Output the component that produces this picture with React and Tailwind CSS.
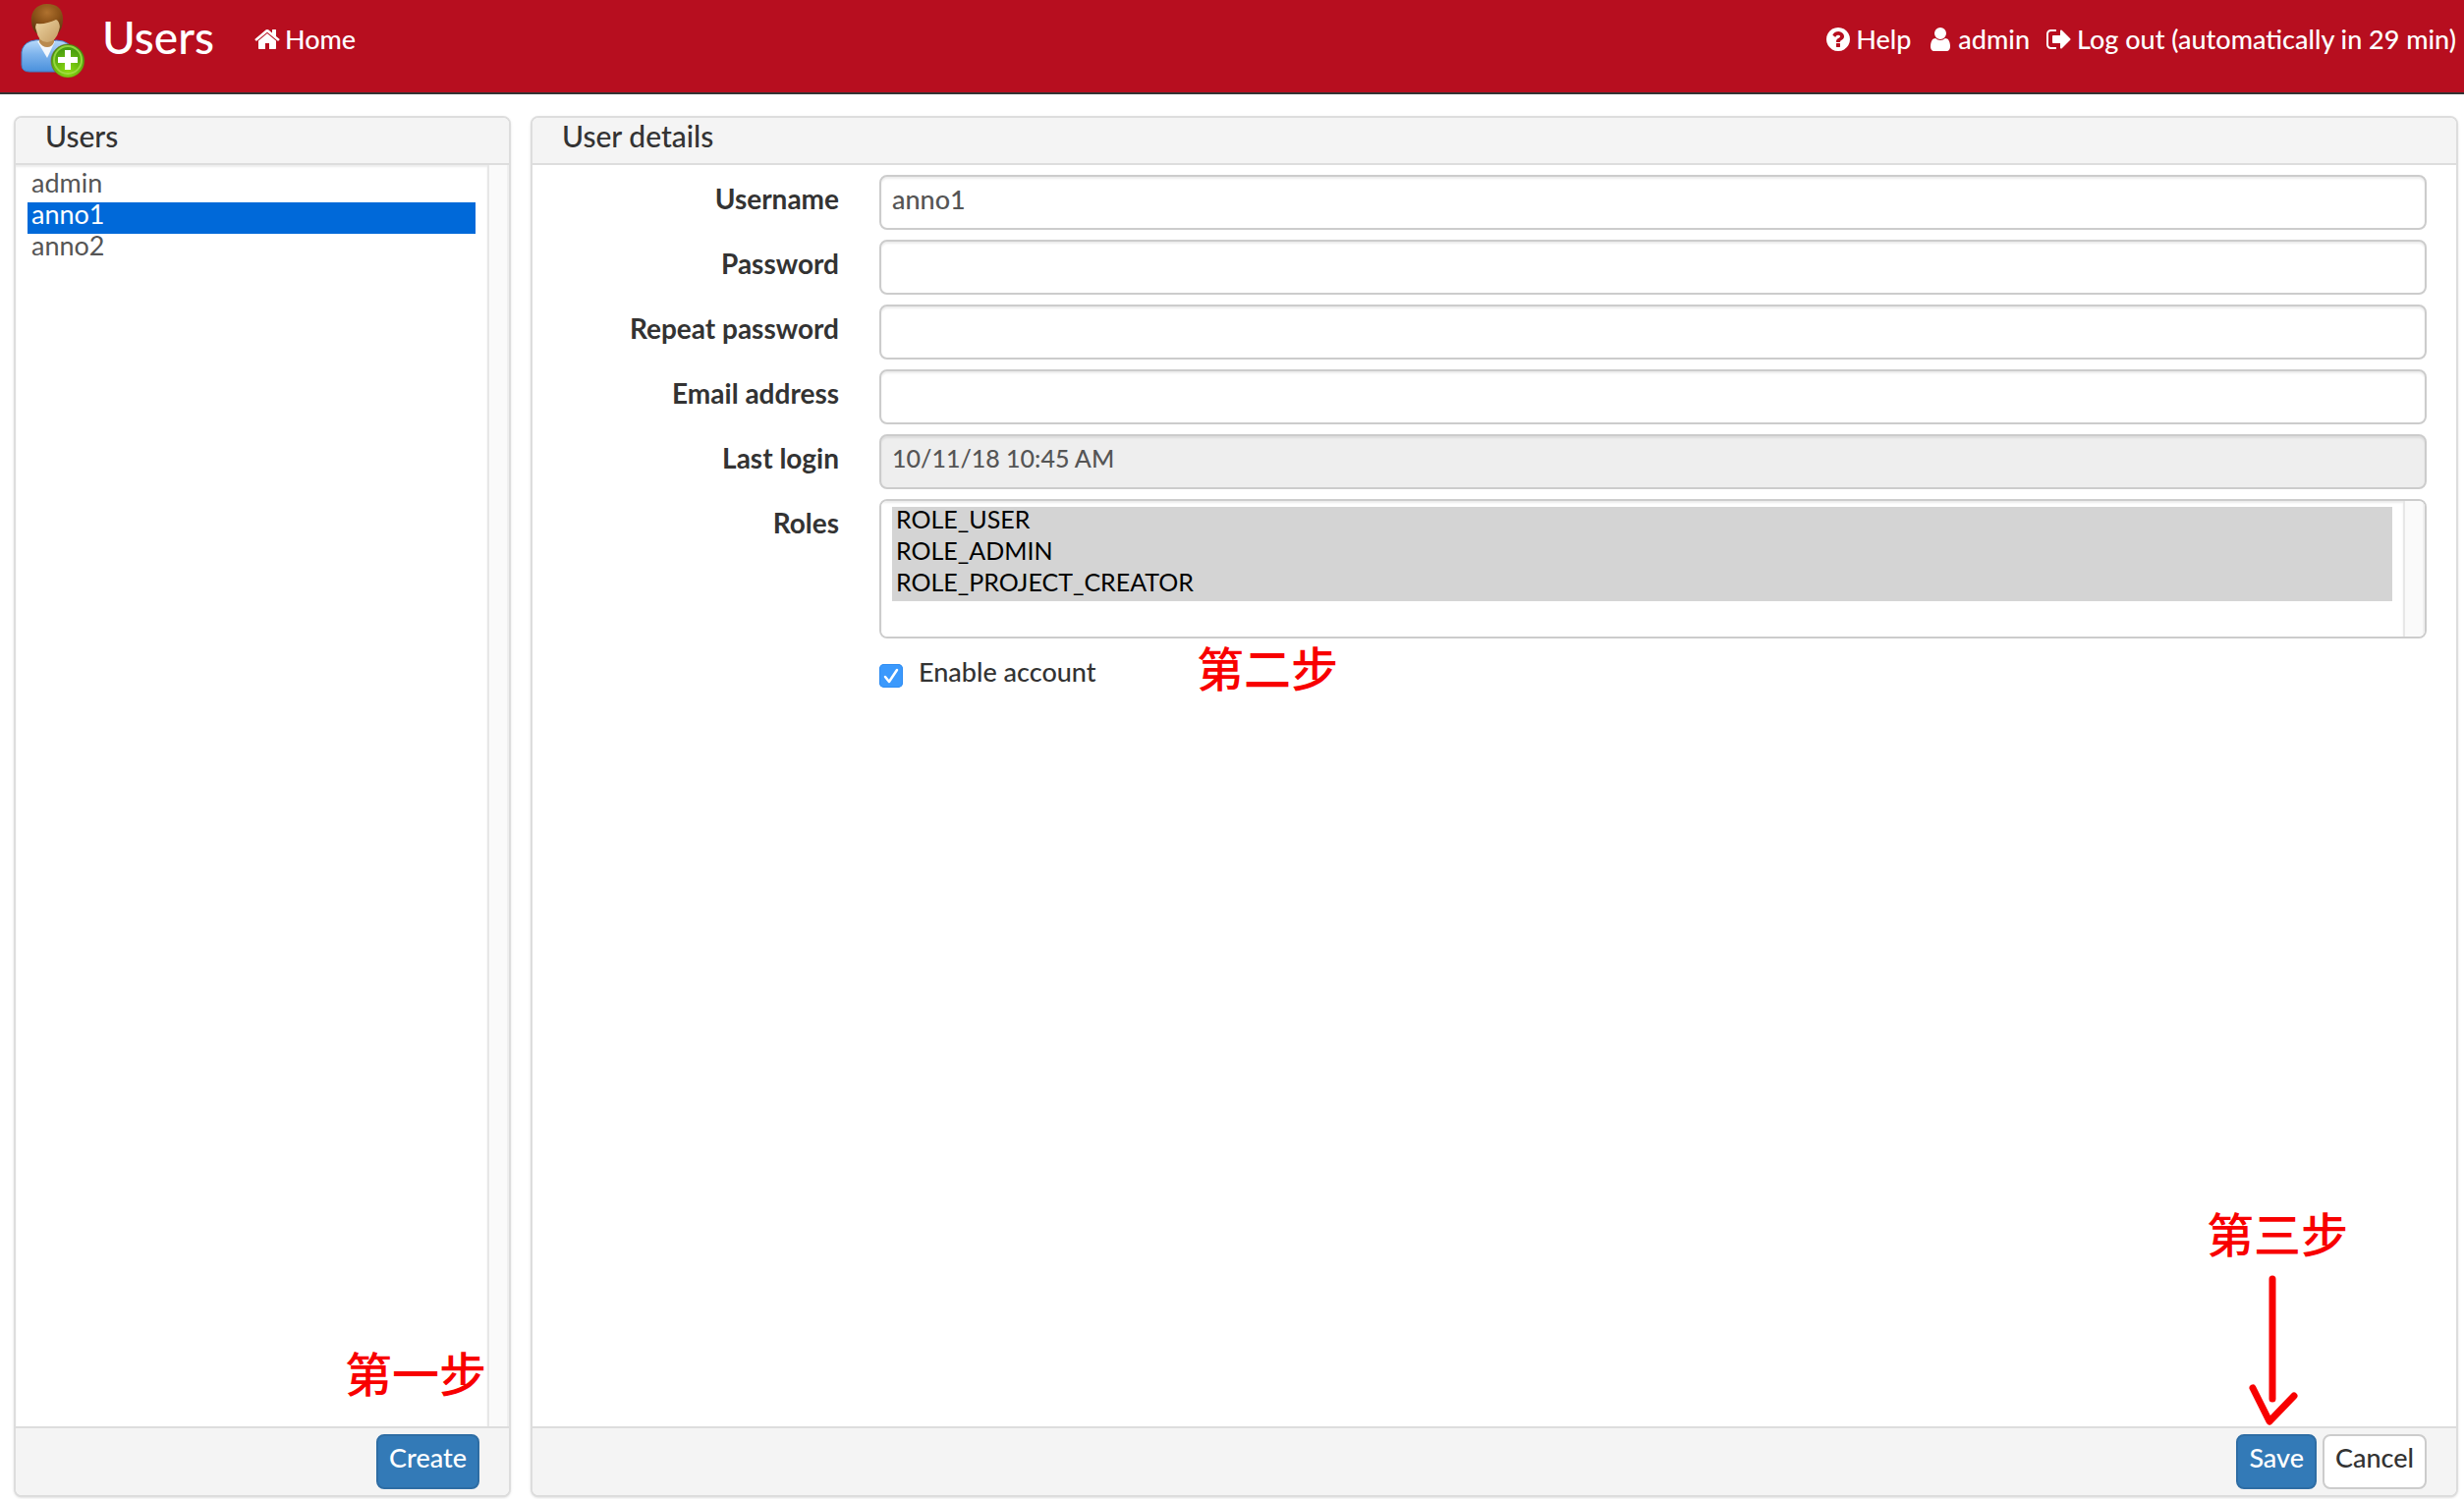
import React from "react";

const HOME =
  "M1472 992v480q0 26-19 45t-45 19h-384v-384h-256v384h-384q-26 0-45-19t-19-45v-480q0-1 .5-3t.5-3l575-474 575 474q1 2 1 6zm223-69l-62 74q-8 9-21 11h-3q-13 0-21-7l-692-577-692 577q-12 8-24 7-13-2-21-11l-62-74q-8-10-7-23.500t11-21.500l719-599q32-26 76-26t76 26l244 204v-195q0-14 9-23t23-9h192q14 0 23 9t9 23v408l219 182q10 8 11 21.500t-7 23.500z";
const HELP =
  "M1024 1376v-192q0-14-9-23t-23-9h-192q-14 0-23 9t-9 23v192q0 14 9 23t23 9h192q14 0 23-9t9-23zm256-672q0-88-55.500-163t-138.500-116-170-41q-243 0-371 213-15 24 8 42l132 100q7 6 19 6 16 0 25-12 53-68 86-92 34-24 86-24 48 0 85.500 26t37.500 59q0 38-20 61t-68 45q-63 28-115.500 86.500t-52.500 125.500v36q0 14 9 23t23 9h192q14 0 23-9t9-23q0-19 21.500-49.500t54.500-49.500q32-18 49-28.500t46-35 44.500-48 28-60.500 12.500-81zm384 192q0 209-103 385.500t-279.500 279.500-385.500 103-385.500-103-279.500-279.500-103-385.500 103-385.500 279.500-279.500 385.500-103 385.500 103 279.500 279.500 103 385.500z";
const USER =
  "M1536 1399q0 109-62.500 187t-150.500 78h-854q-88 0-150.500-78t-62.500-187q0-85 8.500-160.500t31.500-152 58.500-131 94-89 134.500-34.500q131 128 313 128t313-128q76 0 134.500 34.500t94 89 58.500 131 31.500 152 8.500 160.500zm-256-887q0 159-112.500 271.500t-271.500 112.500-271.500-112.500-112.500-271.500 112.500-271.500 271.500-112.500 271.500 112.500 112.500 271.500z";
const SIGN_OUT =
  "M704 1440q0 4 1 20t.5 26.500-3 23.500-10 19.500-20.500 6.500h-320q-119 0-203.500-84.500t-84.500-203.500v-704q0-119 84.500-203.500t203.500-84.500h320q13 0 22.500 9.500t9.500 22.500q0 4 1 20t.5 26.500-3 23.500-10 19.500-20.500 6.500h-320q-66 0-113 47t-47 113v704q0 66 47 113t113 47h312l11.500 1 11.500 3 8 5.500 7 9 2 13.500zm928-544q0 26-19 45l-544 544q-19 19-45 19t-45-19-19-45v-288h-448q-26 0-45-19t-19-45v-384q0-26 19-45t45-19h448v-288q0-26 19-45t45-19 45 19l544 544q19 19 19 45z";

function NavLink({ path, children }) {
  return (
    <a href="#" className="flex items-center gap-1 leading-[80px] text-white">
      <svg viewBox="0 0 1792 1792" className="size-7 fill-current" aria-hidden="true">
        <path d={path} />
      </svg>
      {children}
    </a>
  );
}

function UserAddIcon() {
  return (
    <svg viewBox="0 0 70 80" className="h-20 w-[70px]" aria-hidden="true">
      <defs>
        <linearGradient id="shirt" x1="0" y1="0" x2="0" y2="1">
          <stop offset="0" stopColor="#b9dafb" />
          <stop offset=".45" stopColor="#7db3ec" />
          <stop offset="1" stopColor="#4a90dc" />
        </linearGradient>
        <linearGradient id="face" x1="0" y1="0" x2="1" y2="1">
          <stop offset="0" stopColor="#f0d8a6" />
          <stop offset="1" stopColor="#c39a60" />
        </linearGradient>
        <radialGradient id="hair" cx=".5" cy=".3" r=".7">
          <stop offset="0" stopColor="#b0722f" />
          <stop offset=".6" stopColor="#8a5218" />
          <stop offset="1" stopColor="#683a12" />
        </radialGradient>
        <radialGradient id="badge" cx=".5" cy=".8" r=".75">
          <stop offset="0" stopColor="#8fdc10" />
          <stop offset="1" stopColor="#3f9410" />
        </radialGradient>
      </defs>
      <path d="M28 4C17 4 11 12 12 22c0 5 2 9 5 12h22c4-4 5-9 5-15C44 9 38 4 28 4z" fill="url(#hair)" />
      <path d="M11 42q7-2 10-1l6 3 10-3q8 0 13 4 5 5 5 14v8q-1 6-7 6H10q-8 0-8-7V53q1-8 9-11z" fill="url(#shirt)" stroke="#3f7fc8" />
      <path d="M18 42l10 17 8-17-4-1H22z" fill="#f3f7fc" />
      <path d="M20 36h15v7q-2 5-7 5t-8-5z" fill="#b98a4e" />
      <path d="M17 21q12 3 23-3 2 7 0 13-3 12-12 12T17 31q-2-5 0-10z" fill="url(#face)" />
      <path d="M13 20q0-13 13-15 14 0 17 12l-2 10q-1-6-4-7-10 5-20 4l-2 7q-2-5-2-11z" fill="url(#hair)" />
      <circle cx="49" cy="62" r="17" fill="url(#badge)" stroke="#8a4a12" strokeOpacity=".5" />
      <circle cx="49" cy="61" r="14" fill="none" stroke="#a5e04a" strokeOpacity=".8" strokeWidth="2" />
      <path d="M46 51h6v7h7v6h-7v7h-6v-7h-7v-6h7z" fill="#fff" />
    </svg>
  );
}

function Panel({ title, footer, children }) {
  return (
    <section className="flex flex-col overflow-hidden rounded-lg border-2 border-[#ddd] bg-white shadow-sm">
      <h2 className="border-b-2 border-[#ddd] bg-[#f4f4f4] px-[30px] pb-[10px] text-[30px] leading-[36px]">
        {title}
      </h2>
      <div className="relative flex flex-1 flex-col">{children}</div>
      <footer className="flex justify-end gap-[6px] border-t-2 border-[#ddd] bg-[#f4f4f4] px-[30px] py-[6px]">
        {footer}
      </footer>
    </section>
  );
}

function Button({ primary, children }) {
  return (
    <button
      type="button"
      className={
        primary
          ? "h-14 rounded-lg border-2 border-[#2e6da4] bg-[#337ab7] px-[11px] pb-2 text-white"
          : "h-14 rounded-lg border-2 border-[#ccc] bg-white px-[11px] pb-2 text-[#333]"
      }
    >
      {children}
    </button>
  );
}

function Track() {
  return (
    <div className="w-[22px] shrink-0 border-x-2 border-l-[#e7e7e7] border-r-[#f0f0f0] bg-[#fafafa]" />
  );
}

const fieldBox =
  "h-14 w-full rounded-lg border-2 border-[#ccc] px-[11px] pb-2 text-[#555] shadow-[inset_0_2px_2px_rgba(0,0,0,0.075)] outline-none";

function Field({ id, label, type = "text", value = "", disabled = false }) {
  return (
    <>
      <label htmlFor={id} className="text-right text-[28px] font-bold leading-[48px]">
        {label}
      </label>
      <input
        id={id}
        type={type}
        defaultValue={value}
        disabled={disabled}
        autoComplete="off"
        className={disabled ? `${fieldBox} bg-[#eee] text-[25px]` : `${fieldBox} bg-white`}
      />
    </>
  );
}

function Step({ className, children }) {
  return (
    <span
      className={`absolute whitespace-nowrap font-['Noto_Sans_CJK_SC',sans-serif] text-[48px] font-medium leading-[48px] text-[#f80000] ${className}`}
    >
      {children}
    </span>
  );
}

export default function App() {
  return (
    <div className="flex min-h-screen flex-col bg-white font-['Lato','Noto_Sans_CJK_SC',sans-serif] text-[27px] font-medium text-[#333]">
      <header className="flex h-24 items-start border-b-2 border-[#333] bg-[#b70e1f] pl-5 pr-2 text-white">
        <UserAddIcon />
        <h1 className="ml-[14px] mr-10 text-[46px] leading-[76px]">Users</h1>
        <NavLink path={HOME}>Home</NavLink>
        <nav className="ml-auto flex gap-4">
          <NavLink path={HELP}>Help</NavLink>
          <NavLink path={USER}>admin</NavLink>
          <NavLink path={SIGN_OUT}>Log out (automatically in 29 min)</NavLink>
        </nav>
      </header>

      <main className="grid flex-1 grid-cols-[506fr_1962fr] gap-5 pb-0.5 pl-[14px] pr-[6px] pt-[22px]">
        <Panel title="Users" footer={<Button primary>Create</Button>}>
          <div className="flex flex-1">
            <select
              size={3}
              aria-label="Users"
              defaultValue="anno1"
              className="flex-1 appearance-none overflow-hidden bg-white px-3 py-[6px] text-[#555] shadow-[inset_0_2px_2px_rgba(0,0,0,0.075)] outline-none"
            >
              {["admin", "anno1", "anno2"].map((name) => (
                <option
                  key={name}
                  className="-mt-[5px] h-[37px] px-1 py-0 checked:bg-transparent checked:bg-[linear-gradient(transparent_5px,#0069d9_5px)] checked:[-webkit-text-fill-color:#fff]"
                >
                  {name}
                </option>
              ))}
            </select>
            <Track />
          </div>
          <Step className="bottom-8 right-[23px]">第一步</Step>
        </Panel>

        <Panel
          title="User details"
          footer={
            <>
              <Button primary>Save</Button>
              <Button>Cancel</Button>
            </>
          }
        >
          <form className="grid grid-cols-[312px_1fr] gap-x-[41px] gap-y-[10px] pr-[30px] pt-[10px]">
            <Field id="username" label="Username" value="anno1" />
            <Field id="password" label="Password" type="password" />
            <Field id="repeat" label="Repeat password" type="password" />
            <Field id="email" label="Email address" />
            <Field id="login" label="Last login" value="10/11/18 10:45 AM" disabled />

            <label htmlFor="roles" className="text-right text-[28px] font-bold leading-[48px]">
              Roles
            </label>
            <div className="flex h-[142px] overflow-hidden rounded-lg border-2 border-[#ccc]">
              <select
                id="roles"
                multiple
                size={4}
                defaultValue={["ROLE_USER", "ROLE_ADMIN", "ROLE_PROJECT_CREATOR"]}
                className="h-full flex-1 appearance-none overflow-hidden bg-white px-[11px] py-[6px] text-[25px] text-black shadow-[inset_0_2px_2px_rgba(0,0,0,0.075)] outline-none"
              >
                {["ROLE_USER", "ROLE_ADMIN", "ROLE_PROJECT_CREATOR"].map((role) => (
                  <option
                    key={role}
                    className="-mt-[3px] h-[35px] px-1 py-0 checked:bg-transparent checked:bg-[linear-gradient(transparent_3px,#d4d4d4_3px)] checked:[-webkit-text-fill-color:#000]"
                  >
                    {role}
                  </option>
                ))}
              </select>
              <Track />
            </div>

            <div className="relative col-start-2 flex">
              <label className="flex items-start gap-4 leading-[48px]">
                <span className="relative mt-4 flex size-6">
                  <input
                    type="checkbox"
                    defaultChecked
                    className="peer size-6 appearance-none rounded-[5px] bg-white ring-1 ring-inset ring-[#aaa] checked:bg-[#3b99fc] checked:ring-[#2f8df3]"
                  />
                  <svg
                    viewBox="0 0 24 24"
                    className="pointer-events-none absolute inset-0 hidden fill-none stroke-white stroke-[2.5] peer-checked:block"
                    aria-hidden="true"
                  >
                    <path d="M6 13l4 5 8-12" strokeLinecap="round" strokeLinejoin="round" />
                  </svg>
                </span>
                <span>Enable account</span>
              </label>
              <Step className="-top-1.5 left-[323px]">第二步</Step>
            </div>
          </form>

          <Step className="bottom-[174px] right-[110px]">第三步</Step>
          <svg
            viewBox="0 0 50 155"
            className="absolute bottom-0 right-[161px] h-[155px] w-[50px] fill-none stroke-[#f80000] stroke-[7]"
            aria-hidden="true"
          >
            <path d="M24 5V127M4 116l17 34 25-26" strokeLinecap="round" strokeLinejoin="round" />
          </svg>
        </Panel>
      </main>
    </div>
  );
}
